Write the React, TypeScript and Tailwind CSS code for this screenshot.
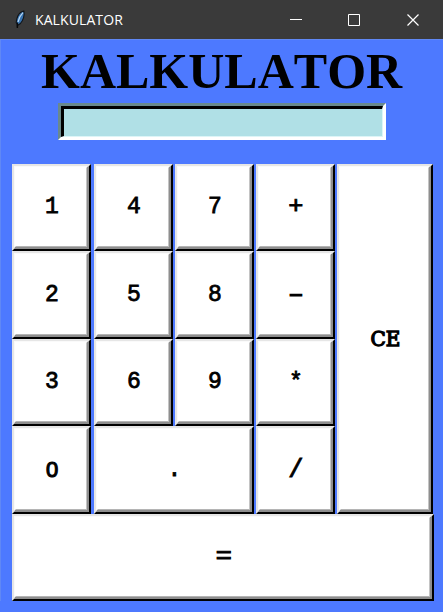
import React from "react";

type Key = { label: string; place: string; font?: string; glyph?: string };

const keys: Key[] = [
  { label: "1", place: "col-start-1 row-start-1 mr-[3px]" },
  { label: "4", place: "col-start-2 row-start-1 mr-[2px]" },
  { label: "7", place: "col-start-3 row-start-1 mr-[2px]" },
  { label: "+", place: "col-start-4 row-start-1 mr-[2px]", glyph: "scale-x-110" },
  {
    label: "CE",
    place: "col-start-5 row-start-1 row-span-4 mr-px",
    font: "font-['DejaVu_Serif',serif] text-[20px] [-webkit-text-stroke:1.3px_black]",
  },
  { label: "2", place: "col-start-1 row-start-2 mr-[3px]" },
  { label: "5", place: "col-start-2 row-start-2 mr-[2px]" },
  { label: "8", place: "col-start-3 row-start-2 mr-[2px]" },
  { label: "-", place: "col-start-4 row-start-2 mr-[2px]", glyph: "scale-x-[1.8]" },
  { label: "3", place: "col-start-1 row-start-3 mr-[3px]" },
  { label: "6", place: "col-start-2 row-start-3 mr-[2px]" },
  { label: "9", place: "col-start-3 row-start-3 mr-[2px]" },
  { label: "*", place: "col-start-4 row-start-3 mr-[2px]", glyph: "pt-[2px]" },
  {
    label: "0",
    place: "col-start-1 row-start-4 mr-[3px]",
    font: "font-['Liberation_Sans',sans-serif] text-[22px] [-webkit-text-stroke:1.1px_black]",
  },
  { label: ".", place: "col-start-2 col-span-2 row-start-4 mr-[2px]" },
  { label: "/", place: "col-start-4 row-start-4 mr-[2px]", glyph: "scale-110" },
  { label: "=", place: "col-start-1 col-span-5 row-start-5", glyph: "scale-x-[1.2]" },
];

function KeyButton({ label, place, font, glyph }: Key) {
  return (
    <button className={`flex border-2 border-t-[#e6e6e6] border-l-[#e6e6e6] border-r-black border-b-black bg-white ${place}`}>
      <span className="flex h-full w-full border-r-2 border-b-2 border-t border-l border-t-[#fafafa] border-l-[#fafafa] border-r-[#8e8e8e] border-b-[#8e8e8e]">
        <span
          className={`flex h-full w-full items-center justify-center border border-t-white border-l-white border-r-[#c4c4c4] border-b-[#b4b4b4] pt-px pl-[2px] leading-none text-black ${
            font ?? "font-['Liberation_Mono',monospace] text-[23px] [-webkit-text-stroke:0.8px_black]"
          }`}
        >
          <span className={glyph ?? ""}>{label}</span>
        </span>
      </span>
    </button>
  );
}

function Feather() {
  return (
    <svg width="12" height="20" viewBox="0 0 12 20">
      <path d="M9.8 1C6.4 1.8 3.6 5.5 2.8 9L2.2 12.4l.8 2 .1 3.4.7-2.6 2.3-1.4C9.3 10.5 11 5 9.8 1Z" fill="#3672b0" stroke="#101418" strokeWidth="1.1" />
      <path d="M9 2.6C6.6 5 4.8 8.6 4 12" fill="none" stroke="#b9d8f2" strokeWidth="1.2" />
      <path d="M3.5 12.5v5.5" stroke="#0a0a0a" strokeWidth="1.2" />
    </svg>
  );
}

export default function App() {
  return (
    <div className="flex h-[612px] w-[443px] flex-col overflow-hidden bg-[#4d79ff]">
      <header className="flex h-[39px] shrink-0 items-center bg-[#3a3a3a] pl-[14px] text-white">
        <Feather />
        <span className="ml-[9px] font-['Open_Sans',sans-serif] text-[14px] tracking-[0.1px]">KALKULATOR</span>
        <svg className="ml-auto mr-[23px]" width="131" height="14" viewBox="0 0 131 14" fill="none" stroke="white">
          <path d="M1 6.5h12" />
          <path d="M59.5 1.5h11v11h-11z" />
          <path d="M118.5 1.5l11 11M129.5 1.5l-11 11" strokeWidth="1.2" />
        </svg>
      </header>
      <main className="flex flex-col border-t border-l border-[#6088f5]">
        <h1 className="mt-px mb-[2px] h-[60px] pl-[40px] font-['Liberation_Serif',serif] text-[50px] leading-[60px] font-bold text-black [font-kerning:none]">
          KALKULATOR
        </h1>
        <div className="ml-[57px] flex h-[37px] w-[328px] border-3 border-t-[#69898d] border-l-[#69898d] border-r-white border-b-white">
          <div className="w-full border-t-[3px] border-l-[3px] border-r border-b border-t-black border-l-black border-r-[#ddf5f7] border-b-[#ddf5f7] bg-[#b0e0e6]" />
        </div>
        <div className="mt-[24px] ml-[11px] grid grid-cols-[82px_81px_81px_81px_97px] grid-rows-[87px_88px_87px_88px_87px]">
          {keys.map((k) => (
            <KeyButton key={k.label} {...k} />
          ))}
        </div>
      </main>
    </div>
  );
}
